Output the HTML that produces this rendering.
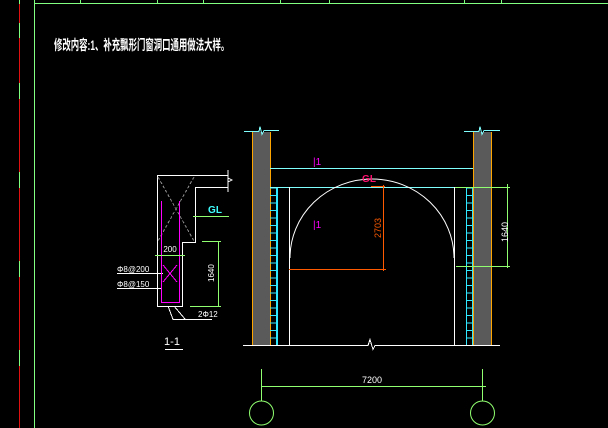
<!DOCTYPE html>
<html><head><meta charset="utf-8"><style>
html,body{margin:0;padding:0;background:#000;width:608px;height:428px;overflow:hidden}
svg{display:block}
text{font-family:"Liberation Sans","Noto Sans CJK SC",sans-serif}
</style></head><body>
<svg width="608" height="428" viewBox="0 0 608 428" xmlns="http://www.w3.org/2000/svg" shape-rendering="crispEdges">
<line x1="19.5" y1="0" x2="19.5" y2="428" stroke="#e01010" stroke-width="1"/>
<g stroke="#80ff80" stroke-width="1">
<line x1="19.5" y1="0" x2="19.5" y2="4"/>
<line x1="19.5" y1="23" x2="19.5" y2="38"/>
<line x1="19.5" y1="83" x2="19.5" y2="99"/>
<line x1="19.5" y1="172" x2="19.5" y2="188"/>
<line x1="19.5" y1="261" x2="19.5" y2="277"/>
<line x1="19.5" y1="350" x2="19.5" y2="366"/>
<line x1="34.5" y1="0" x2="34.5" y2="428"/>
<line x1="34" y1="3.5" x2="608" y2="3.5"/>
<line x1="80.5" y1="0" x2="80.5" y2="3"/><line x1="157.5" y1="0" x2="157.5" y2="3"/>
<line x1="203.5" y1="0" x2="203.5" y2="3"/><line x1="280.5" y1="0" x2="280.5" y2="3"/>
<line x1="329.5" y1="0" x2="329.5" y2="3"/><line x1="464.5" y1="0" x2="464.5" y2="3"/>
<line x1="501.5" y1="0" x2="501.5" y2="3"/>
</g>
<text x="54" y="50" font-size="14" fill="#fff" font-weight="bold" transform="translate(54 0) scale(0.6 1) translate(-54 0)">修改内容:1、补充飘形门窗洞口通用做法大样。</text>

<g stroke="#fff" fill="none" stroke-width="1">
<path d="M157.5 306 V175.5 H228"/>
<path d="M228 187.5 H195.5 V242.5 H182.5 V306.5 H157"/>
<path d="M228 170 V192"/>
<path d="M228 178 l4 2 l-4 2"/>
<line x1="117" y1="273.5" x2="163" y2="273.5"/>
<line x1="117" y1="288.5" x2="162" y2="288.5"/>
<path d="M168 306 L173 319.5 H212 M174 306 L185 319"/>
<line x1="165" y1="349.5" x2="183" y2="349.5"/>
</g>
<g stroke="#888" stroke-dasharray="3,2" fill="none">
<path d="M158 177 L194 241 M194 177 L158 241"/>
</g>
<g stroke="#ff00ff" fill="none">
<path d="M161.5 201 V302.5 H179.5 V201"/>
<path d="M163 265 L177 282 M177 265 L163 282"/>
</g>
<g stroke="#90ff70" fill="none">
<line x1="155" y1="255.5" x2="185" y2="255.5"/>
<line x1="193" y1="216.5" x2="229" y2="216.5"/>
<line x1="218.5" y1="241" x2="218.5" y2="306"/>
<line x1="202" y1="241.5" x2="221" y2="241.5"/>
<line x1="190" y1="306.5" x2="221" y2="306.5"/>
</g>
<text x="215" y="213" font-size="10" fill="#40ffff" font-weight="bold" text-anchor="middle">GL</text>
<text x="170" y="252" font-size="8" fill="#fff" text-anchor="middle">200</text>
<text x="117" y="272" font-size="8" fill="#fff">Φ8@200</text>
<text x="117" y="287" font-size="8" fill="#fff">Φ8@150</text>
<text x="198" y="317" font-size="8" fill="#fff">2Φ12</text>
<text x="0" y="0" font-size="8" fill="#fff" transform="translate(214 282) rotate(-90)">1640</text>
<text x="172" y="345" font-size="11" fill="#fff" text-anchor="middle">1-1</text>

<rect x="252" y="132" width="18" height="213" fill="#5a5a5a"/>
<rect x="473" y="132" width="19" height="213" fill="#5a5a5a"/>
<g stroke="#ffa500"><line x1="252.5" y1="132" x2="252.5" y2="345"/><line x1="270.5" y1="132" x2="270.5" y2="345"/>
<line x1="473.5" y1="132" x2="473.5" y2="345"/><line x1="491.5" y1="132" x2="491.5" y2="345"/></g>
<g stroke="#80ffff" fill="none">
<path d="M244 131.5 H259 l1-5 l2 8 l2-4 H279"/>
<path d="M464 131.5 H479 l1-5 l2 8 l2-4 H500"/>
<line x1="270" y1="168.5" x2="473" y2="168.5"/>
<line x1="270" y1="187.5" x2="473" y2="187.5"/>
</g>
<defs><pattern id="br" width="7" height="7.5" patternUnits="userSpaceOnUse">
<path d="M0 0.5 H7 M3.5 0 V7.5" stroke="#30e8ff" fill="none"/></pattern></defs>
<rect x="270" y="188" width="7" height="157" fill="url(#br)"/>
<rect x="467" y="188" width="6" height="157" fill="url(#br)"/>
<g stroke="#30e8ff"><line x1="277.5" y1="188" x2="277.5" y2="345"/><line x1="466.5" y1="188" x2="466.5" y2="345"/></g>
<g stroke="#fff" fill="none">
<line x1="289.5" y1="187" x2="289.5" y2="345"/>
<line x1="454.5" y1="187" x2="454.5" y2="345"/>
<path d="M243 345.5 H368 l2-6 l3 10 l2-4 H500"/>
<path d="M290 258 A82 79 0 0 1 454 258" shape-rendering="auto"/>
</g>
<g stroke="#ff5a00" fill="none">
<line x1="383.5" y1="185" x2="383.5" y2="271"/>
<line x1="289" y1="269.5" x2="386" y2="269.5"/>
<line x1="371" y1="186.5" x2="385" y2="186.5"/>
</g>
<text x="0" y="0" font-size="9" fill="#ff5a00" transform="translate(381 238) rotate(-90)">2703</text>
<text x="369" y="182" font-size="10" fill="#ff1070" font-weight="bold" text-anchor="middle">GL</text>
<text x="313" y="165" font-size="10" fill="#ff00ff">|1</text>
<text x="313" y="228" font-size="10" fill="#ff00ff">|1</text>
<g stroke="#90ff70" fill="none">
<line x1="507.5" y1="184" x2="507.5" y2="268"/>
<line x1="455" y1="187.5" x2="510" y2="187.5"/>
<line x1="456" y1="266.5" x2="510" y2="266.5"/>
<line x1="261" y1="386.5" x2="486" y2="386.5"/>
<line x1="261.5" y1="369" x2="261.5" y2="401"/>
<line x1="482.5" y1="369" x2="482.5" y2="401"/>
<circle cx="261.5" cy="413" r="12" shape-rendering="auto"/>
<circle cx="482.5" cy="413" r="12" shape-rendering="auto"/>
</g>
<text x="0" y="0" font-size="9" fill="#fff" transform="translate(508 242) rotate(-90)">1640</text>
<text x="372" y="383" font-size="9" fill="#fff" text-anchor="middle">7200</text>
</svg>
</body></html>
